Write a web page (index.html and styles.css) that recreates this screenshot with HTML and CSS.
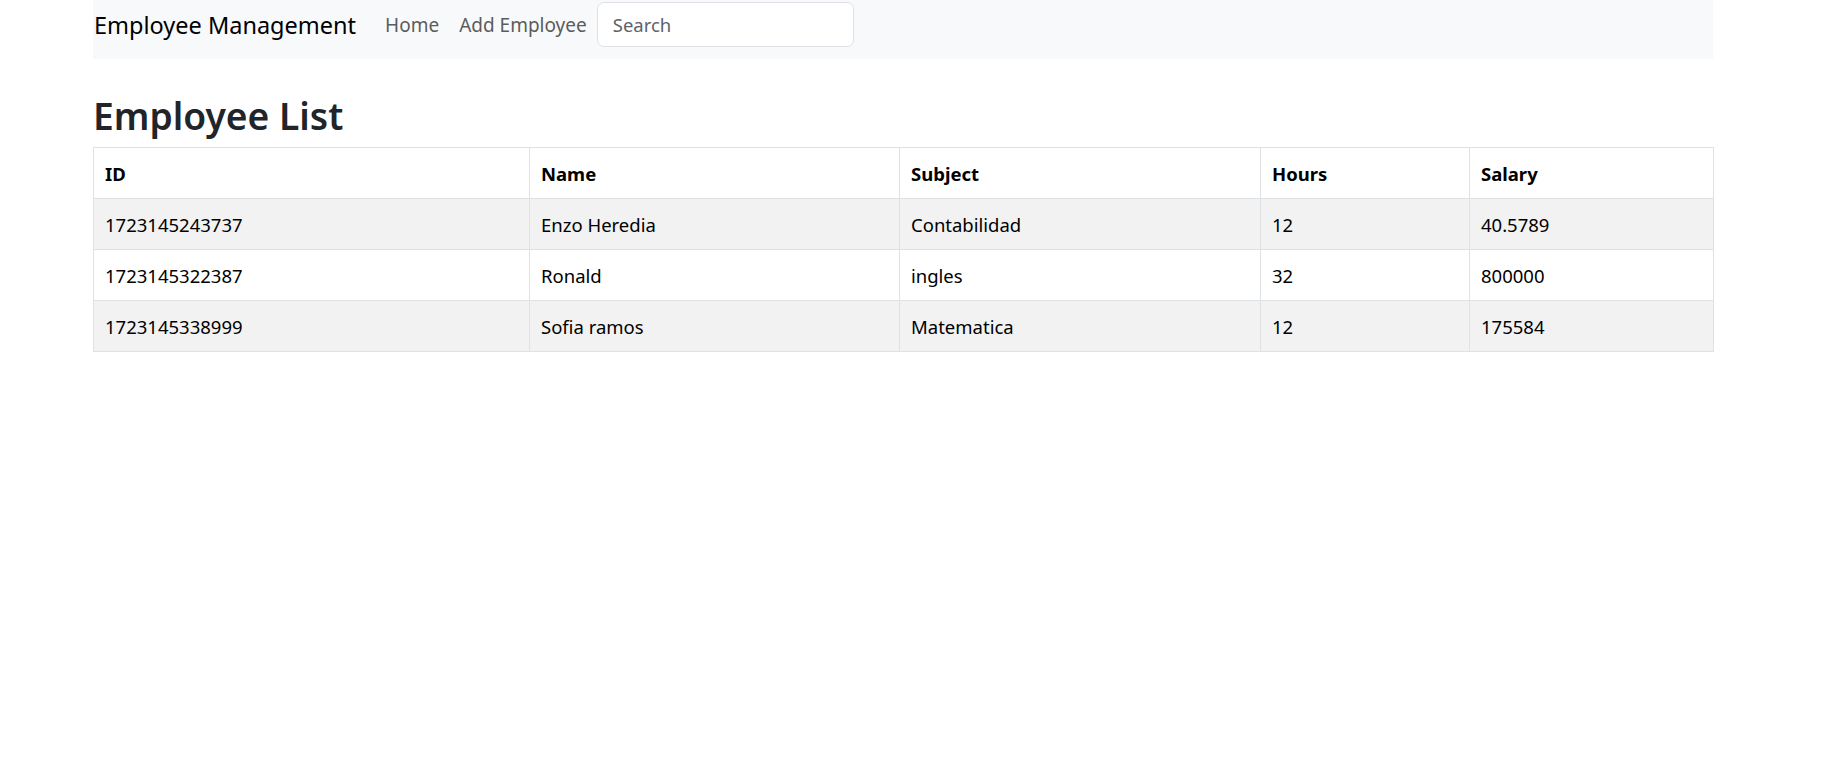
FILE: index.html
```html
<!DOCTYPE html>
<html lang="en">
<head>
<meta charset="utf-8">
<title>Employee Management</title>
<link rel="stylesheet" href="styles.css">
</head>
<body>
<div class="container">
  <nav class="navbar">
    <span class="brand">Employee Management</span>
    <a class="nav-link" href="#">Home</a>
    <a class="nav-link" href="#">Add Employee</a>
    <input class="search" type="text" placeholder="Search">
  </nav>
  <h1 class="title">Employee List</h1>
  <table class="emp-table">
    <colgroup>
      <col class="c-id"><col class="c-name"><col class="c-subject"><col class="c-hours"><col class="c-salary">
    </colgroup>
    <thead>
      <tr><th>ID</th><th>Name</th><th>Subject</th><th>Hours</th><th>Salary</th></tr>
    </thead>
    <tbody>
      <tr class="odd"><td>1723145243737</td><td>Enzo Heredia</td><td>Contabilidad</td><td>12</td><td>40.5789</td></tr>
      <tr><td>1723145322387</td><td>Ronald</td><td>ingles</td><td>32</td><td>800000</td></tr>
      <tr class="odd"><td>1723145338999</td><td>Sofia ramos</td><td>Matematica</td><td>12</td><td>175584</td></tr>
    </tbody>
  </table>
</div>
</body>
</html>
```

FILE: styles.css
```css
html, body {
  margin: 0;
  padding: 0;
  background: #fff;
}
body {
  font-family: "Noto Sans", "Open Sans", sans-serif;
  color: #212529;
}
.container {
  width: 1620px;
  margin-left: 93px;
}
.navbar {
  box-sizing: border-box;
  height: 59px;
  padding: 0 0 10px 0;
  background: #f8f9fa;
  display: flex;
  align-items: center;
}
.brand {
  font-size: 23.5px;
  color: #000;
  margin-right: 19px;
  padding-left: 1px;
}
.nav-link {
  font-size: 19px;
  color: #5b5c5d;
  text-decoration: none;
  padding: 0 10px;
}
.search {
  box-sizing: border-box;
  width: 257px;
  height: 45px;
  margin-left: 0;
  border: 1px solid #dee2e6;
  border-radius: 7px;
  background: #fff;
  padding: 0 15px;
  font-family: "Noto Sans", sans-serif;
  font-size: 18.5px;
  color: #212529;
  outline: none;
}
.search::placeholder {
  color: #5c636a;
}
.title {
  margin: 0;
  padding-top: 35px;
  height: 88px;
  box-sizing: border-box;
  font-size: 37.2px;
  font-weight: 600;
  line-height: 1.2;
  color: #212529;
}
.emp-table {
  width: 1620px;
  border-collapse: collapse;
  table-layout: fixed;
  color: #000;
  font-size: 18.5px;
}
.c-id { width: 436px; }
.c-name { width: 370px; }
.c-subject { width: 361px; }
.c-hours { width: 209px; }
.c-salary { width: 244px; }
.emp-table th,
.emp-table td {
  border: 1px solid #dee2e6;
  height: 51px;
  box-sizing: border-box;
  padding: 0 11px;
  text-align: left;
  vertical-align: middle;
}
.emp-table th {
  font-weight: 700;
}
.emp-table tr.odd td {
  background: #f2f2f2;
}
```
